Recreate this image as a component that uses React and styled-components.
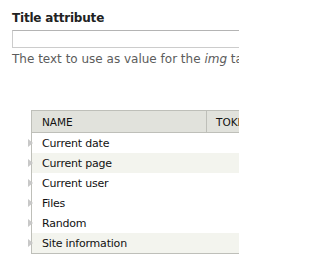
import styled, {createGlobalStyle} from "styled-components";

const GlobalStyle = createGlobalStyle`
  html, body {
    margin: 0;
    padding: 0;
    background: #fff;
    overflow: hidden;
  }
  body {
    font-family: "DejaVu Sans", Verdana, sans-serif;
    color: #333;
  }
`;

const Page = styled.div`
  width: 239px;
  height: 273px;
  overflow: hidden;
  padding: 10px 0 0 12px;
  box-sizing: border-box;
`;

const FormItem = styled.div`
  width: 400px;
`;

const Label = styled.label`
  display: block;
  font-size: 12px;
  font-weight: bold;
  line-height: 16px;
  letter-spacing: -0.2px;
  color: #222;
  margin-bottom: 4px;
`;

const TextInput = styled.div`
  height: 16px;
  border: 1px solid #ccc;
  border-top-color: #b4b4b4;
  background: #fff;
`;

const Description = styled.div`
  margin-top: 4px;
  font-size: 12px;
  line-height: 14px;
  letter-spacing: 0;
  color: #5c5c5c;
  white-space: nowrap;
`;

const Table = styled.div`
  margin: 44px 0 0 19px;
  width: 320px;
  border: 1px solid #bebfb9;
  border-right: none;
`;

const HeaderRow = styled.div`
  display: grid;
  grid-template-columns: 174px 1fr;
  height: 21px;
  background: #e1e2dc;
  border-bottom: 1px solid #bebfb9;
`;

const HeaderCell = styled.div`
  display: flex;
  align-items: center;
  padding-left: ${p => p.$pad}px;
  font-size: 10.5px;
  color: #111;
  text-transform: uppercase;
  border-left: ${p => (p.$divider ? "1px solid #bebfb9" : "none")};
`;

const Row = styled.div`
  position: relative;
  height: 20px;
  display: flex;
  align-items: center;
  padding-left: 10px;
  background: ${p => (p.$shaded ? "#f3f4ee" : "#fff")};
  font-size: 11px;
  letter-spacing: -0.2px;
  color: #111;
`;

const Expander = styled.span`
  position: absolute;
  left: -4px;
  top: 6px;
  width: 0;
  height: 0;
  border-top: 4.5px solid transparent;
  border-bottom: 4.5px solid transparent;
  border-left: 5px solid #c8c8c8;
`;

const rows = [
    {name: "Current date"},
    {name: "Current page", shaded: true},
    {name: "Current user"},
    {name: "Files"},
    {name: "Random"},
    {name: "Site information", shaded: true},
];

const App = () => {
    return (
        <Page>
            <GlobalStyle/>
            <FormItem>
                <Label>Title attribute</Label>
                <TextInput/>
                <Description>
                    The text to use as value for the <em>img</em> tag title attribute.
                </Description>
            </FormItem>
            <Table>
                <HeaderRow>
                    <HeaderCell $pad={10}>Name</HeaderCell>
                    <HeaderCell $pad={9} $divider>Token</HeaderCell>
                </HeaderRow>
                {rows.map(row => (
                    <Row key={row.name} $shaded={row.shaded}>
                        <Expander/>
                        {row.name}
                    </Row>
                ))}
            </Table>
        </Page>
    );
};

export default App;
